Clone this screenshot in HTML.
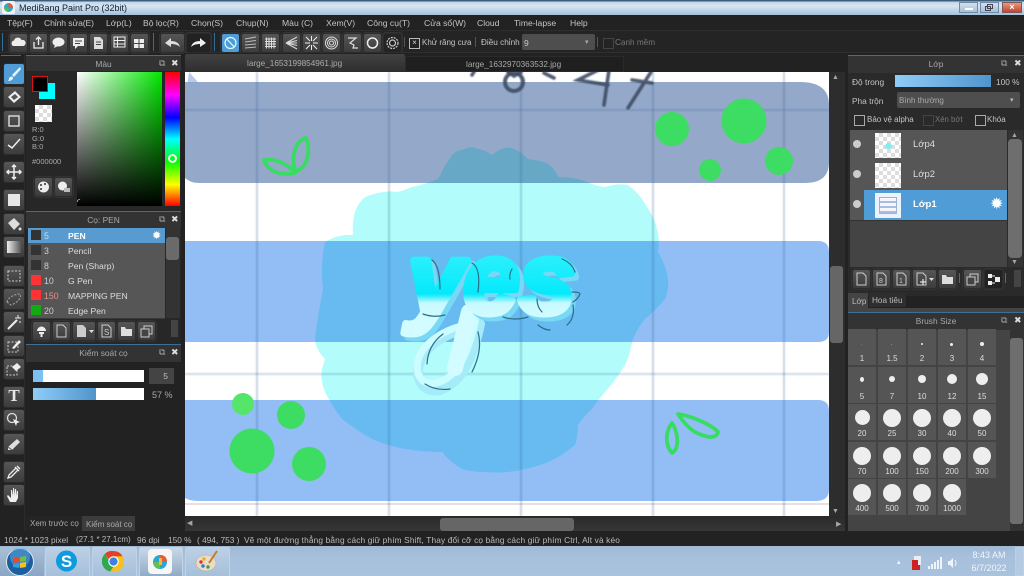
<!DOCTYPE html>
<html><head><meta charset="utf-8"><style>
html,body{margin:0;padding:0;width:1024px;height:576px;overflow:hidden;background:#222}
body{font-family:"Liberation Sans","DejaVu Sans",sans-serif;font-size:8.6px;color:#c4c4c4;position:relative}
.a,.a *{box-sizing:border-box}
.a{position:absolute}
.t{position:absolute;white-space:nowrap;line-height:12px}
.b{position:absolute;width:17px;height:18px;background:linear-gradient(#565656,#3c3c3c);border:1px solid #2c2c2c;border-radius:3px;box-shadow:0 0 0 1px #333}
.b svg,.v svg{position:absolute;left:0;top:0;width:100%;height:100%}
.v{position:absolute;left:3px;width:20px;height:20px;background:linear-gradient(#565656,#3c3c3c);border-radius:3px;border:1px solid #2c2c2c}
.h{position:absolute;height:17px;background:#333;border-top:1px solid #3f6f90;text-align:center;line-height:16px;color:#a8a8a8;font-size:8.400px}
.r{position:absolute;left:28px;width:137px;height:15px;background:#565656;border-bottom:1px solid #3a3a3a}
.r i{position:absolute;left:3px;top:2px;width:10px;height:10px;background:#333}
.r span{position:absolute;left:16px;top:2px;line-height:12px;font-size:8.800px;color:#ccc}
.r b{position:absolute;left:40px;top:2px;line-height:12px;font-weight:normal;font-size:8.600px;color:#ddd}
.c{position:absolute;width:28px;height:36px;background:#555}
.c i{position:absolute;border-radius:50%;background:#eee}
.c span{position:absolute;left:0;right:0;bottom:2px;text-align:center;font-size:8px;line-height:9px;color:#ddd}
.ck{position:absolute;width:10px;height:10px;border:1px solid #aaa}
.ico{position:absolute;color:#a5a5a5;font-size:9px;line-height:10px}
.ly{position:absolute;left:850px;width:157px;height:30px;background:#565656;border-bottom:1px solid #333}
.th{position:absolute;left:25px;top:3px;width:26px;height:25px;background-color:#fff;background-image:conic-gradient(#ddd 25%,#fff 0 50%,#ddd 0 75%,#fff 0);background-size:8px 8px}
.eye{position:absolute;left:3px;top:10px;width:8px;height:8px;border-radius:50%;background:#ccc}
.tb{position:absolute;top:547px;height:29px;border:1px solid #c0d3e6;border-radius:2px;background:linear-gradient(#bdd0e4,#a5bfda)}
</style></head><body>
<div class="a" style="left:0;top:0;width:1024px;height:15px;background:linear-gradient(#3d5d7c 0,#3d5d7c 1px,#c4d7e8 2px,#d8e6f2 6px,#a5c0da 15px)"></div>
<svg class="a" style="left:2px;top:1px" width="13" height="13" viewBox="0 0 13 13"><rect width="13" height="13" rx="2" fill="#f2f2f2"/><circle cx="6.500" cy="6.500" r="4.500" fill="#2aa7cf"/><path d="M6.500 2A4.500 4.500 0 0 1 11 6.500H6.500z" fill="#e8563a"/><path d="M2 6.500a4.500 4.500 0 0 0 4.500 4.500V6.500z" fill="#59b85a"/></svg>
<div class="t" style="left:19px;top:2px;color:#10202e;font-size:9px">MediBang Paint Pro (32bit)</div>
<div class="a" style="left:959px;top:2px;width:19px;height:11px;background:linear-gradient(#d3e0ec,#a8bfd6);border:1px solid #6f8aa5"><div class="a" style="left:5px;top:5px;width:8px;height:2px;background:#fff;border:0"></div></div>
<div class="a" style="left:980px;top:2px;width:19px;height:11px;background:linear-gradient(#d3e0ec,#a8bfd6);border:1px solid #6f8aa5"><div class="a" style="left:6px;top:1px;width:6px;height:5px;border:1px solid #445"></div><div class="a" style="left:4px;top:3px;width:6px;height:5px;border:1px solid #445"></div></div>
<div class="a" style="left:1002px;top:2px;width:20px;height:11px;background:linear-gradient(#e49a85,#c8402c);border:1px solid #7c5a55;color:#fff;text-align:center;line-height:9px;font-size:9px;font-weight:bold">×</div>

<div class="a" style="left:0;top:15px;width:1024px;height:16px;background:#222;border-bottom:1px solid #2e2e2e"></div>
<div class="t" style="left:7px;top:17px">Tệp(F)</div><div class="t" style="left:44px;top:17px;letter-spacing:-.1px">Chỉnh sửa(E)</div><div class="t" style="left:106px;top:17px">Lớp(L)</div><div class="t" style="left:143px;top:17px">Bộ lọc(R)</div><div class="t" style="left:191px;top:17px">Chọn(S)</div><div class="t" style="left:236px;top:17px">Chụp(N)</div><div class="t" style="left:282px;top:17px">Màu (C)</div><div class="t" style="left:326px;top:17px">Xem(V)</div><div class="t" style="left:367px;top:17px">Công cụ(T)</div><div class="t" style="left:424px;top:17px">Cửa sổ(W)</div><div class="t" style="left:477px;top:17px">Cloud</div><div class="t" style="left:514px;top:17px">Time-lapse</div><div class="t" style="left:570px;top:17px">Help</div>

<div class="a" style="left:0;top:31px;width:1024px;height:22px;background:#242424;border-bottom:1px solid #2f2f2f"></div>
<div class="a" style="left:2px;top:33px;width:1px;height:18px;background:#2f6f9a"></div>
<div class="a" style="left:153px;top:33px;width:1px;height:18px;background:#2f6f9a"></div>
<div class="a" style="left:214px;top:33px;width:1px;height:18px;background:#2f6f9a"></div>
<div class="b" style="left:9px;top:33px"><svg viewBox="0 0 17 18"><path d="M3 12a3 3 0 0 1 1-5.500A4 4 0 0 1 11.500 6a3 3 0 0 1 2 6z" fill="#eee"/></svg></div>
<div class="b" style="left:29px;top:33px"><svg viewBox="0 0 17 18" fill="none" stroke="#eee" stroke-width="1.300"><path d="M4 8v6h9V8M8.500 11V3M6 5.500l2.500-2.500 2.500 2.500"/></svg></div>
<div class="b" style="left:49px;top:33px"><svg viewBox="0 0 17 18"><ellipse cx="8.500" cy="8" rx="6" ry="4.500" fill="#eee"/><path d="M5 11l-1 3 4-2z" fill="#eee"/></svg></div>
<div class="b" style="left:69px;top:33px"><svg viewBox="0 0 17 18"><path d="M3 4h11v8H8l-3 3v-3H3z" fill="#eee"/><path d="M5 7h7M5 9.500h5" stroke="#444"/></svg></div>
<div class="b" style="left:89px;top:33px"><svg viewBox="0 0 17 18"><path d="M4 3h6l3 3v9H4z" fill="#ddd"/><path d="M6 8h5M6 10.500h5" stroke="#444"/></svg></div>
<div class="b" style="left:110px;top:33px"><svg viewBox="0 0 17 18" fill="none" stroke="#eee"><rect x="3" y="3" width="11" height="10"/><path d="M3 6.500h11M3 10h11M6.500 3v10"/></svg></div>
<div class="b" style="left:130px;top:33px"><svg viewBox="0 0 17 18" fill="#eee"><rect x="3" y="5" width="4.500" height="4"/><rect x="8.500" y="5" width="4.500" height="4"/><rect x="3" y="10" width="4.500" height="4"/><rect x="8.500" y="10" width="4.500" height="4"/></svg></div>
<div class="b" style="left:160px;top:33px;width:23px"><svg viewBox="0 0 23 18"><path d="M4 9l6-5v3c5 0 8 2 9 6-2-2-5-3-9-3v3z" fill="#ddd"/></svg></div>
<div class="b" style="left:186px;top:33px;width:23px;background:#222"><svg viewBox="0 0 23 18"><path d="M19 9l-6-5v3C8 7 5 9 4 13c2-2 5-3 9-3v3z" fill="#eee"/></svg></div>
<div class="b" style="left:221px;top:33px;background:#4f9cd6"><svg viewBox="0 0 17 18" fill="none" stroke="#dff" stroke-width="1.200"><circle cx="8.500" cy="9" r="5.500"/><path d="M4.700 5l7.600 8"/></svg></div>
<div class="b" style="left:241px;top:33px"><svg viewBox="0 0 17 18" stroke="#bbb" fill="none"><path d="M3 5l11-2M3 8l11-1.500M3 11l11-1M3 14l11-1"/></svg></div>
<div class="b" style="left:261px;top:33px"><svg viewBox="0 0 17 18" stroke="#ddd" fill="none"><path d="M3 5h11M3 7.500h11M3 10h11M3 12.500h11M4.500 3.500v11M7 3.500v11M9.500 3.500v11M12 3.500v11"/></svg></div>
<div class="b" style="left:282px;top:33px"><svg viewBox="0 0 17 18" stroke="#ddd" fill="none"><path d="M3 9l11-6M3 9l11-2.500M3 9h11M3 9l11 2.500M3 9l11 6"/></svg></div>
<div class="b" style="left:302px;top:33px"><svg viewBox="0 0 17 18" stroke="#eee" fill="none"><path d="M3 3l4 4M14 3l-4 4M3 15l4-4M14 15l-4-4M8.500 2v5M8.500 11v5M2 9h5M10 9h5"/></svg></div>
<div class="b" style="left:322px;top:33px"><svg viewBox="0 0 17 18" stroke="#ddd" fill="none"><circle cx="8.500" cy="9" r="6"/><circle cx="8.500" cy="9" r="4"/><circle cx="8.500" cy="9" r="2"/></svg></div>
<div class="b" style="left:343px;top:33px"><svg viewBox="0 0 17 18" stroke="#ddd" fill="none" stroke-width="1.200"><path d="M4 4h8l-6 5 4 2-1 3h5"/></svg></div>
<div class="b" style="left:363px;top:33px"><svg viewBox="0 0 17 18" stroke="#eee" fill="none" stroke-width="1.500"><circle cx="8.500" cy="9" r="5"/></svg></div>
<div class="b" style="left:383px;top:33px;background:#242424"><svg viewBox="0 0 17 18" stroke="#ccc" fill="none" stroke-width="1.200"><circle cx="8.500" cy="9" r="5.500" stroke-dasharray="2 1"/><circle cx="8.500" cy="9" r="3"/></svg></div>
<div class="a" style="left:404px;top:37px;width:1px;height:10px;background:#555"></div>
<div class="ck" style="left:409px;top:38px;width:9px;height:9px;border-color:#bbb;color:#ddd;font-size:8px;line-height:7px;text-align:center">×</div>
<div class="t" style="left:422px;top:37px;font-size:8px">Khử răng cưa</div>
<div class="a" style="left:475px;top:37px;width:1px;height:10px;background:#555"></div>
<div class="t" style="left:481px;top:37px;font-size:8.200px">Điều chỉnh</div>
<div class="a" style="left:522px;top:34px;width:73px;height:16px;background:#4e4e4e;border-radius:2px"></div>
<div class="t" style="left:524px;top:37px;font-size:8.500px">9</div>
<div class="t" style="left:585px;top:37px;font-size:7px;color:#aaa">▾</div>
<div class="a" style="left:597px;top:37px;width:1px;height:10px;background:#555"></div>
<div class="ck" style="left:603px;top:38px;width:9px;height:9px;border-color:#444"></div>
<div class="t" style="left:615px;top:37px;font-size:8.200px;color:#777">Cạnh mềm</div>

<div class="a" style="left:185px;top:53px;width:660px;height:19px;background:#222"></div>
<div class="a" style="left:185px;top:54px;width:220px;height:18px;background:linear-gradient(#424242,#2e2e2e);border-radius:2px 2px 0 0"></div>
<div class="t" style="left:247px;top:58px;font-size:8.200px;color:#aaa">large_1653199854961.jpg</div>
<div class="a" style="left:405px;top:56px;width:219px;height:16px;background:#1f1f1f;border:1px solid #2b2b2b"></div>
<div class="t" style="left:466px;top:59px;font-size:8.200px;color:#aaa">large_1632970363532.jpg</div>

<svg class="a" style="left:185px;top:72px" width="644" height="444" viewBox="185 72 644 444">
<defs>
<linearGradient id="g" gradientUnits="userSpaceOnUse" x1="0" y1="255" x2="0" y2="320"><stop offset="0" stop-color="#2bf0fc"/><stop offset=".6" stop-color="#05e9fb"/><stop offset=".74" stop-color="#c8f9ff"/><stop offset="1" stop-color="#d2fcff"/></linearGradient>
<filter id="bl" x="-5%" y="-5%" width="110%" height="110%"><feGaussianBlur stdDeviation=".7"/></filter>
</defs>
<rect x="185" y="72" width="644" height="444" fill="#fff"/>
<path d="M185 82H800Q829 82 829 105V162Q829 183 805 183H200Q190 183 185 178Z" fill="#94a9c9"/>
<path d="M185 241H818Q829 241 829 252V332Q829 342 818 342H185Z" fill="#93bdf5"/>
<path d="M185 400H818Q829 400 829 411V490Q829 501 815 501H200Q190 501 185 498Z" fill="#93bdf5"/>
<rect x="185" y="503" width="644" height="2" fill="#e8dfe2"/>
<path d="M189 72L205 90L192 84L187 86Z" fill="#8fa6d8" opacity=".6"/>
<g style="mix-blend-mode:multiply">
<path fill="#b2fdfb" d="M452 155Q457 150 462 150Q470 146 475 148Q485 150 492 155Q503 146 512 148Q522 152 528 159Q540 160 548 164Q556 170 558 177Q572 177 582 180Q595 186 605 187Q618 183 628 185Q640 194 645 204Q654 216 657 229Q660 240 658 252Q666 265 668 279Q669 290 665 299Q656 310 645 319Q636 330 632 342Q630 355 625 365Q616 380 605 392Q598 400 592 409Q584 416 578 425Q578 436 575 445Q562 456 548 462Q536 467 525 469Q505 474 485 472Q472 472 462 469Q450 462 442 452Q424 452 405 449Q388 446 372 439Q356 430 342 419Q332 406 325 392Q320 380 322 369L325 359Q316 350 315 339Q318 314 323 289Q320 265 325 242Q338 234 353 235Q352 222 355 212Q358 203 365 197Q382 190 398 192Q405 190 412 187Q426 184 438 179Q445 165 452 155Z"/>
</g>
<g stroke="#3d5f95" stroke-width="2" fill="none" filter="url(#bl)">
<path d="M257 72V516M389 72V516M521 72V516M653 72V516M784 72V516" stroke-opacity=".28"/>
<path d="M185 110H829M185 374H829" stroke-opacity=".24"/>
</g>
<g fill="#3ddc62">
<circle cx="672" cy="129" r="17"/><circle cx="744" cy="121" r="22.500"/><circle cx="710" cy="170" r="11"/><circle cx="779" cy="161" r="14"/>
<circle cx="243" cy="404" r="11" fill="#55e56a"/><circle cx="291" cy="415" r="14"/><circle cx="252" cy="451" r="22.500"/><circle cx="309" cy="464" r="17"/>
</g>
<g fill="none" stroke="#39dc62" stroke-width="3.800" stroke-linejoin="round">
<path d="M264 160C272 158 288 163 295 173C282 176 268 172 264 160Z"/>
<path d="M296 171C290 160 295 140 306 138C311 150 308 168 296 171Z"/>
<path d="M678 414C692 416 712 425 718 432C716 440 705 437 695 432C688 428 682 420 678 414Z"/>
<path d="M672 423C665 432 665 445 672 453C680 448 678 432 672 423Z"/>
</g>
<g fill="none" stroke="#3d4a64" stroke-opacity=".9" stroke-width="3.600" stroke-linecap="round" filter="url(#bl)">
<circle cx="514" cy="82" r="9" stroke-width="4"/><path d="M508 72L514 76L521 72"/>
<path d="M544 73L554 78M475 70L472 75"/>
<path d="M598 70L578 80L608 85M609 70L604 105"/>
<path d="M651 72L628 108M632 80L652 83"/>
</g>
<g fill="none" stroke-linecap="round">
<path d="M478 322C472 350 462 380 438 388C420 392 411 374 419 357C427 341 445 331 464 327" stroke="#a5ecf8" stroke-width="10" transform="translate(2 2)"/>
<path d="M476 318C470 346 460 378 436 383C420 387 413 371 420 355C427 341 443 331 461 326" stroke="#cbfcff" stroke-width="7"/>
<path d="M469 312L455 368" stroke="#d2fcff" stroke-width="16"/>
</g>
<text x="408" y="313" font-family="Liberation Sans,sans-serif" font-style="italic" font-weight="bold" font-size="100" textLength="167" lengthAdjust="spacingAndGlyphs" fill="#78d8f6" stroke="#78d8f6" stroke-width="7" stroke-linejoin="round" transform="translate(4 4)">yes</text>
<text x="408" y="313" font-family="Liberation Sans,sans-serif" font-style="italic" font-weight="bold" font-size="100" textLength="167" lengthAdjust="spacingAndGlyphs" fill="url(#g)" stroke="url(#g)" stroke-width="7" stroke-linejoin="round">yes</text>
<g fill="none" stroke="#2b6f86" stroke-width="1.200" stroke-linecap="round">
<path d="M432 260Q440 266 440 289M472 263Q481 268 478 292M423 314Q434 318 445 315M503 317Q515 321 528 317M562 259Q572 263 575 272M572 292Q580 292 580 294Q578 299 573 302M573 305Q575 318 567 325M538 325Q544 330 550 330M512 269Q509 274 510 279M537 299Q537 307 542 312M443 334Q428 345 427 364M478 332Q483 350 472 372M425 384Q436 391 450 389"/>
</g>
</svg>
<div class="a" style="left:829px;top:72px;width:16px;height:444px;background:#2d2d2d"></div>
<div class="a" style="left:830px;top:266px;width:13px;height:77px;background:#666;border-radius:3px"></div>
<div class="ico" style="left:832px;top:73px;font-size:7px">▲</div>
<div class="ico" style="left:832px;top:507px;font-size:7px">▼</div>
<div class="a" style="left:185px;top:516px;width:660px;height:15px;background:linear-gradient(#2a2a2a,#363636)"></div>
<div class="a" style="left:440px;top:518px;width:134px;height:13px;background:#666;border-radius:3px"></div>
<div class="ico" style="left:187px;top:519px;font-size:7px">◀</div>
<div class="ico" style="left:836px;top:520px;font-size:7px">▶</div>

<!-- tool column -->
<div class="a" style="left:0;top:55px;width:25px;height:476px;background:#222;border-right:1px solid #2c2c2c"></div>
<div class="a" style="left:1px;top:55px;width:20px;height:1px;background:#3f6f90"></div>
<div class="v" style="top:63px;background:#4f9cd6"><svg viewBox="0 0 20 20"><path d="M16 3L8 11l2 2 7-8zM5 14c2-2 4-2 4 0s-3 3-5 3c1-1 1-2 1-3z" fill="#e8f4ff"/></svg></div>
<div class="v" style="top:86px"><svg viewBox="0 0 20 20"><path d="M4 10l7-6 6 6-7 6z" fill="#eee"/><path d="M7 10l4-3 3 3-4 3z" fill="#555"/></svg></div>
<div class="v" style="top:110px"><svg viewBox="0 0 20 20"><rect x="5" y="5" width="10" height="10" fill="none" stroke="#ddd" stroke-width="1.400"/></svg></div>
<div class="v" style="top:133px"><svg viewBox="0 0 20 20" stroke="#eee" stroke-width="1.500" fill="none"><path d="M4 11l4 3 8-9"/></svg></div>
<div class="v" style="top:161px"><svg viewBox="0 0 20 20" stroke="#eee" stroke-width="1.500" fill="none"><path d="M10 3v14M3 10h14M8 5l2-2 2 2M8 15l2 2 2-2M5 8l-2 2 2 2M15 8l2 2-2 2"/></svg></div>
<div class="v" style="top:189px"><svg viewBox="0 0 20 20"><rect x="4" y="4" width="12" height="12" fill="#e6e6e6"/></svg></div>
<div class="v" style="top:213px"><svg viewBox="0 0 20 20"><path d="M4 9l6-5 6 6-6 6z" fill="#ddd"/><circle cx="16" cy="15" r="1.500" fill="#ddd"/></svg></div>
<div class="v" style="top:236px"><svg viewBox="0 0 20 20"><defs><linearGradient id="gr"><stop offset="0" stop-color="#eee"/><stop offset="1" stop-color="#555"/></linearGradient></defs><rect x="3" y="4" width="14" height="12" fill="url(#gr)"/></svg></div>
<div class="v" style="top:265px"><svg viewBox="0 0 20 20"><rect x="4" y="5" width="12" height="10" fill="none" stroke="#ccc" stroke-dasharray="2 1.500"/></svg></div>
<div class="v" style="top:288px"><svg viewBox="0 0 20 20"><path d="M3 13c1-5 8-8 13-8 2 4-3 9-9 11z" fill="none" stroke="#aaa" stroke-dasharray="2 1.500"/></svg></div>
<div class="v" style="top:311px"><svg viewBox="0 0 20 20"><path d="M4 17L13 8" stroke="#eee" stroke-width="2"/><path d="M14 3v3M11 6h6M16 9v2" stroke="#eee"/></svg></div>
<div class="v" style="top:335px"><svg viewBox="0 0 20 20"><rect x="4" y="6" width="10" height="10" fill="none" stroke="#ccc" stroke-dasharray="2 1.500"/><path d="M8 12l7-8 2 2-7 7z" fill="#eee"/></svg></div>
<div class="v" style="top:358px"><svg viewBox="0 0 20 20"><rect x="3" y="7" width="10" height="9" fill="none" stroke="#ccc" stroke-dasharray="2 1.500"/><path d="M8 8l5-4 4 4-5 4z" fill="#eee"/></svg></div>
<div class="v" style="top:386px;text-align:center;font:bold 17px/18px 'Liberation Serif',serif;color:#e6e6e6">T</div>
<div class="v" style="top:409px"><svg viewBox="0 0 20 20"><circle cx="8" cy="8" r="4.500" fill="none" stroke="#ddd" stroke-width="1.300"/><path d="M9 9l7 3-3 1-1 3z" fill="#eee"/></svg></div>
<div class="v" style="top:433px"><svg viewBox="0 0 20 20"><path d="M4 13L13 5l3 3-8 8H4z" fill="#ddd"/><path d="M4 13l4 3" stroke="#555"/></svg></div>
<div class="v" style="top:461px"><svg viewBox="0 0 20 20" fill="none" stroke="#eee" stroke-width="1.300"><path d="M4 16l1-3 7-7 2 2-7 7zM11 5l4 4M13 4l3 3"/></svg></div>
<div class="v" style="top:484px"><svg viewBox="0 0 20 20"><path d="M6 17l-3-6 1-1 3 3V5h1l1 6V3h1l1 8V4h1l1 7V6h1v7l-2 4z" fill="#eee"/></svg></div>

<!-- Color panel -->
<div class="h" style="left:26px;top:55px;width:155px">Màu</div>
<div class="a" style="left:26px;top:71px;width:155px;height:139px;background:#272727"></div>
<div class="ico" style="left:159px;top:58px">⧉</div><div class="ico" style="left:171px;top:58px;font-weight:bold;color:#ddd">✖</div>
<div class="a" style="left:39px;top:83px;width:16px;height:16px;background:#0ff"></div>
<div class="a" style="left:32px;top:76px;width:16px;height:16px;background:#000;border:1px solid #d11"></div>
<div class="a" style="left:35px;top:105px;width:17px;height:17px;background-color:#fff;background-image:conic-gradient(#ddd 25%,#fff 0 50%,#ddd 0 75%,#fff 0);background-size:8px 8px"></div>
<div class="t" style="left:32px;top:126px;font-size:7.500px;line-height:8.500px;color:#aaa">R:0<br>G:0<br>B:0</div>
<div class="t" style="left:32px;top:156px;font-size:7.500px;color:#aaa">#000000</div>
<div class="b" style="left:34px;top:177px"><svg viewBox="0 0 17 18"><circle cx="8.500" cy="9" r="5.500" fill="#eee"/><circle cx="6" cy="7" r="1" fill="#333"/><circle cx="10" cy="6" r="1" fill="#333"/><circle cx="6" cy="11" r="1" fill="#333"/></svg></div>
<div class="b" style="left:54px;top:177px"><svg viewBox="0 0 17 18"><circle cx="7.500" cy="8" r="4.500" fill="#eee"/><rect x="9" y="10" width="6" height="4" fill="#bbb"/></svg></div>
<div class="a" style="left:77px;top:72px;width:85px;height:134px;background:linear-gradient(to bottom,rgba(0,0,0,0),#000),linear-gradient(to right,#fff,#00e800)"></div>
<div class="a" style="left:77px;top:198px;width:8px;height:8px;border:0;color:#fff;font-size:8px;line-height:8px">◜</div>
<div class="a" style="left:165px;top:72px;width:15px;height:134px;background:linear-gradient(#f00,#f0f 17%,#00f 34%,#0ff 50%,#0f0 67%,#ff0 84%,#f00)"></div>
<div class="a" style="left:168px;top:154px;width:9px;height:9px;border-radius:50%;border:2px solid #fff"></div>

<!-- Brush panel -->
<div class="a" style="left:26px;top:210px;width:155px;height:134px;background:#272727"></div>
<div class="h" style="left:26px;top:211px;width:155px">Cọ: PEN</div>
<div class="ico" style="left:159px;top:214px">⧉</div><div class="ico" style="left:171px;top:214px;font-weight:bold;color:#ddd">✖</div>
<div class="r" style="top:228px;background:#579bd0"><i></i><span style="color:#cdd">5</span><b style="color:#fff;font-weight:bold">PEN</b></div>
<div class="t" style="left:152px;top:230px;color:#fff;font-size:11px">✹</div>
<div class="r" style="top:243px"><i></i><span>3</span><b>Pencil</b></div>
<div class="r" style="top:258px"><i></i><span>8</span><b>Pen (Sharp)</b></div>
<div class="r" style="top:273px"><i style="background:#f33"></i><span>10</span><b>G Pen</b></div>
<div class="r" style="top:288px"><i style="background:#f33"></i><span style="color:#e09090">150</span><b>MAPPING PEN</b></div>
<div class="r" style="top:303px"><i style="background:#1a1"></i><span>20</span><b>Edge Pen</b></div>
<div class="a" style="left:166px;top:228px;width:14px;height:90px;background:#333"></div>
<div class="a" style="left:166px;top:237px;width:13px;height:23px;background:#6a6a6a;border-radius:3px"></div>
<div class="b" style="left:32px;top:321px"><svg viewBox="0 0 17 18"><path d="M4 9a4.500 4.500 0 0 1 9 0zM6 10h5v2H9.500v3h-2v-3H6z" fill="#eee"/></svg></div>
<div class="b" style="left:52px;top:321px"><svg viewBox="0 0 17 18"><path d="M4 3h6l3 3v9H4z" fill="none" stroke="#ccc"/></svg></div>
<div class="b" style="left:72px;top:321px;width:22px"><svg viewBox="0 0 22 18"><path d="M4 3h6l3 3v9H4z" fill="#ccc"/><path d="M16 8h5l-2.500 3z" fill="#ddd"/></svg></div>
<div class="b" style="left:97px;top:321px"><svg viewBox="0 0 17 18"><path d="M4 3h6l3 3v9H4z" fill="none" stroke="#ccc"/><text x="6" y="13" font-size="8" fill="#ccc">S</text></svg></div>
<div class="b" style="left:117px;top:321px"><svg viewBox="0 0 17 18"><path d="M3 5h4l1 2h6v7H3z" fill="#ddd"/></svg></div>
<div class="b" style="left:137px;top:321px"><svg viewBox="0 0 17 18" fill="none" stroke="#ccc"><rect x="6" y="4" width="8" height="8"/><rect x="3" y="7" width="8" height="8" fill="#444"/></svg></div>
<div class="a" style="left:171px;top:320px;width:7px;height:17px;background:#444"></div>

<div class="h" style="left:26px;top:344px;width:155px;border-top-color:#3f6f90">Kiểm soát cọ</div>
<div class="ico" style="left:159px;top:347px">⧉</div><div class="ico" style="left:171px;top:347px;font-weight:bold;color:#ddd">✖</div>
<div class="a" style="left:33px;top:370px;width:111px;height:12px;background:#fff"><div class="a" style="left:0;top:0;width:10px;height:12px;background:#7cc0f0"></div></div>
<div class="a" style="left:149px;top:368px;width:25px;height:16px;background:#444;text-align:right;padding-right:6px;line-height:16px;color:#bbb">5</div>
<div class="a" style="left:33px;top:388px;width:111px;height:12px;background:#fff"><div class="a" style="left:0;top:0;width:63px;height:12px;background:linear-gradient(to right,#8fcdf8,#4f95cc)"></div></div>
<div class="t" style="left:152px;top:389px;color:#aaa;font-size:9px">57 %</div>
<div class="a" style="left:26px;top:516px;width:56px;height:15px;background:#252525"></div>
<div class="t" style="left:30px;top:518px;font-size:8px;color:#aaa">Xem trước cọ</div>
<div class="a" style="left:82px;top:516px;width:53px;height:16px;background:#3c3c3c"></div>
<div class="t" style="left:86px;top:519px;font-size:8px;color:#aaa">Kiểm soát cọ</div>

<!-- Right panel -->
<div class="a" style="left:848px;top:71px;width:176px;height:225px;background:#2a2a2a"></div>
<div class="h" style="left:848px;top:55px;width:176px">Lớp</div>
<div class="ico" style="left:1001px;top:58px">⧉</div><div class="ico" style="left:1014px;top:58px;font-weight:bold;color:#ddd">✖</div>
<div class="t" style="left:852px;top:76px;font-size:8.400px">Độ trong</div>
<div class="a" style="left:895px;top:75px;width:96px;height:12px;background:linear-gradient(to right,#8fcdf8,#4f95cc)"></div>
<div class="t" style="left:996px;top:76px;font-size:8.300px">100 %</div>
<div class="t" style="left:852px;top:95px;font-size:8.300px">Pha trộn</div>
<div class="a" style="left:897px;top:92px;width:123px;height:16px;background:#4e4e4e;border-radius:2px"></div>
<div class="t" style="left:899px;top:95px;font-size:8px;color:#aaa">Bình thường</div>
<div class="t" style="left:1010px;top:95px;font-size:7px;color:#bbb">▾</div>
<div class="ck" style="left:854px;top:115px;width:9px;height:9px"></div><div class="t" style="left:867px;top:114px;font-size:8px">Bảo vệ alpha</div>
<div class="ck" style="left:923px;top:115px;width:9px;height:9px;border-color:#444"></div><div class="t" style="left:935px;top:114px;font-size:7.800px;color:#777">Xén bớt</div>
<div class="ck" style="left:975px;top:115px;width:9px;height:9px"></div><div class="t" style="left:987px;top:114px;font-size:8px">Khóa</div>
<div class="a" style="left:850px;top:130px;width:157px;height:137px;background:#444"></div>
<div class="ly" style="top:130px"><i class="eye"></i><div class="th"><div class="a" style="left:10px;top:10px;width:7px;height:6px;background:#7eeef0;border-radius:50%"></div></div><div class="t" style="left:63px;top:9px;color:#ddd;font-size:9.500px">Lớp4</div></div>
<div class="ly" style="top:160px"><i class="eye"></i><div class="th"></div><div class="t" style="left:63px;top:9px;color:#ddd;font-size:9.500px">Lớp2</div></div>
<div class="ly" style="top:190px;background:#565656"><i class="eye"></i><div class="a" style="left:14px;top:0;width:143px;height:30px;background:#4f9cd6"></div><div class="th" style="background:#eef2fb"><div class="a" style="left:4px;top:4px;width:18px;height:17px;border:1px solid #9cb4d8;background:repeating-linear-gradient(#f4f6fc 0 3px,#a6bce0 3px 5px)"></div></div><div class="t" style="left:63px;top:9px;color:#fff;font-size:9.500px;font-weight:bold">Lớp1</div><div class="t" style="left:140px;top:6px;color:#fff;font-size:16px;line-height:18px">✹</div></div>
<div class="a" style="left:1008px;top:130px;width:15px;height:137px;background:#333"></div>
<div class="a" style="left:1008px;top:139px;width:14px;height:119px;background:#6e6e6e;border-radius:4px"></div>
<div class="ico" style="left:1011px;top:131px;font-size:7px">▲</div><div class="ico" style="left:1011px;top:258px;font-size:7px">▼</div>
<div class="b" style="left:852px;top:269px"><svg viewBox="0 0 17 18"><path d="M4 3h6l3 3v9H4z" fill="none" stroke="#ccc"/></svg></div>
<div class="b" style="left:872px;top:269px"><svg viewBox="0 0 17 18"><path d="M4 3h6l3 3v9H4z" fill="none" stroke="#ccc"/><text x="6" y="13" font-size="7" fill="#ccc">8</text></svg></div>
<div class="b" style="left:892px;top:269px"><svg viewBox="0 0 17 18"><path d="M4 3h6l3 3v9H4z" fill="none" stroke="#ccc"/><text x="6" y="13" font-size="7" fill="#ccc">1</text></svg></div>
<div class="b" style="left:912px;top:269px;width:23px"><svg viewBox="0 0 23 18"><path d="M4 3h6l3 3v9H4z" fill="none" stroke="#ccc"/><path d="M7 12h6M10 9v6" stroke="#fff"/><path d="M16 8h5l-2.500 3z" fill="#ddd"/></svg></div>
<div class="b" style="left:938px;top:269px"><svg viewBox="0 0 17 18"><path d="M3 5h4l1 2h6v7H3z" fill="#ddd"/></svg></div>
<div class="a" style="left:959px;top:273px;width:1px;height:10px;background:#666"></div>
<div class="b" style="left:963px;top:269px"><svg viewBox="0 0 17 18" fill="none" stroke="#ccc"><rect x="6" y="4" width="8" height="8"/><rect x="3" y="7" width="8" height="8" fill="#444"/></svg></div>
<div class="b" style="left:984px;top:269px;background:#222"><svg viewBox="0 0 17 18" fill="#eee"><rect x="3" y="4" width="4" height="4"/><rect x="3" y="11" width="4" height="4"/><rect x="10" y="7" width="5" height="5"/><path d="M7 6h3M7 13h3" stroke="#eee"/></svg></div>
<div class="a" style="left:1005px;top:273px;width:1px;height:10px;background:#666"></div>
<div class="a" style="left:1014px;top:270px;width:7px;height:17px;background:#444"></div>
<div class="a" style="left:848px;top:293px;width:20px;height:15px;background:#444"></div>
<div class="t" style="left:852px;top:296px;font-size:8.200px;color:#bbb">Lớp</div>
<div class="a" style="left:869px;top:293px;width:37px;height:14px;background:#2e2e2e"></div>
<div class="t" style="left:872px;top:295px;font-size:8.200px;color:#bbb">Hoa tiêu</div>
<div class="a" style="left:848px;top:308px;width:176px;height:226px;background:#444"></div>
<div class="h" style="left:848px;top:312px;width:176px;background:#333">Brush Size</div>
<div class="ico" style="left:1001px;top:315px">⧉</div><div class="ico" style="left:1014px;top:315px;font-weight:bold;color:#ddd">✖</div>
<div class="a" style="left:1010px;top:329px;width:14px;height:205px;background:#333"></div>
<div class="a" style="left:1010px;top:338px;width:13px;height:186px;background:#6e6e6e;border-radius:3px"></div>

<div class="c" style="left:848px;top:329px"><i style="left:13px;top:15px;width:1px;height:1px;background:#777"></i><span>1</span></div>
<div class="c" style="left:878px;top:329px"><i style="left:13px;top:15px;width:1px;height:1px;background:#999"></i><span>1.5</span></div>
<div class="c" style="left:908px;top:329px"><i style="left:13px;top:14px;width:2px;height:2px"></i><span>2</span></div>
<div class="c" style="left:938px;top:329px"><i style="left:12px;top:14px;width:3px;height:3px"></i><span>3</span></div>
<div class="c" style="left:968px;top:329px"><i style="left:12px;top:13px;width:4px;height:4px"></i><span>4</span></div>
<div class="c" style="left:848px;top:367px"><i style="left:12px;top:10px;width:4px;height:5px"></i><span>5</span></div>
<div class="c" style="left:878px;top:367px"><i style="left:11px;top:9px;width:6px;height:6px"></i><span>7</span></div>
<div class="c" style="left:908px;top:367px"><i style="left:10px;top:8px;width:8px;height:8px"></i><span>10</span></div>
<div class="c" style="left:938px;top:367px"><i style="left:9px;top:7px;width:10px;height:10px"></i><span>12</span></div>
<div class="c" style="left:968px;top:367px"><i style="left:8px;top:6px;width:12px;height:12px"></i><span>15</span></div>
<div class="c" style="left:848px;top:404px"><i style="left:7px;top:6px;width:15px;height:15px"></i><span>20</span></div>
<div class="c" style="left:878px;top:404px"><i style="left:5px;top:5px;width:18px;height:18px"></i><span>25</span></div>
<div class="c" style="left:908px;top:404px"><i style="left:5px;top:5px;width:18px;height:18px"></i><span>30</span></div>
<div class="c" style="left:938px;top:404px"><i style="left:5px;top:5px;width:18px;height:18px"></i><span>40</span></div>
<div class="c" style="left:968px;top:404px"><i style="left:5px;top:5px;width:18px;height:18px"></i><span>50</span></div>
<div class="c" style="left:848px;top:442px"><i style="left:5px;top:5px;width:18px;height:18px"></i><span>70</span></div>
<div class="c" style="left:878px;top:442px"><i style="left:5px;top:5px;width:18px;height:18px"></i><span>100</span></div>
<div class="c" style="left:908px;top:442px"><i style="left:5px;top:5px;width:18px;height:18px"></i><span>150</span></div>
<div class="c" style="left:938px;top:442px"><i style="left:5px;top:5px;width:18px;height:18px"></i><span>200</span></div>
<div class="c" style="left:968px;top:442px"><i style="left:5px;top:5px;width:18px;height:18px"></i><span>300</span></div>
<div class="c" style="left:848px;top:479px"><i style="left:5px;top:5px;width:18px;height:18px"></i><span>400</span></div>
<div class="c" style="left:878px;top:479px"><i style="left:5px;top:5px;width:18px;height:18px"></i><span>500</span></div>
<div class="c" style="left:908px;top:479px"><i style="left:5px;top:5px;width:18px;height:18px"></i><span>700</span></div>
<div class="c" style="left:938px;top:479px"><i style="left:5px;top:5px;width:18px;height:18px"></i><span>1000</span></div>

<!-- status -->
<div class="a" style="left:0;top:531px;width:1024px;height:15px;background:#222"></div>
<div class="t" style="left:4px;top:534px;font-size:8.300px;color:#bbb">1024 * 1023 pixel</div>
<div class="t" style="left:76px;top:534px;font-size:8px;color:#bbb">(27.1 * 27.1cm)</div>
<div class="t" style="left:137px;top:534px;font-size:8.300px;color:#bbb">96 dpi</div>
<div class="t" style="left:168px;top:534px;font-size:8.300px;color:#bbb">150 %</div>
<div class="t" style="left:197px;top:534px;font-size:8.300px;color:#bbb">( 494, 753 )</div>
<div class="t" style="left:244px;top:534px;font-size:8.300px;letter-spacing:.15px;color:#bbb">Vẽ một đường thẳng bằng cách giữ phím Shift, Thay đổi cỡ cọ bằng cách giữ phím Ctrl, Alt và kéo</div>

<!-- taskbar -->
<div class="a" style="left:0;top:546px;width:1024px;height:30px;background:linear-gradient(#9fb9d5,#a7c0dc 40%,#a9c2dd)"></div>
<div class="a" style="left:0;top:547px;width:44px;height:29px;background:linear-gradient(#a9c0d8,#8aa6c4)"></div>
<svg class="a" style="left:6px;top:548px" width="28" height="28" viewBox="0 0 28 28"><circle cx="14" cy="14" r="13.500" fill="#1d5f9e" stroke="#dfe9f3"/><circle cx="14" cy="9" r="10" fill="#5aa4dc" opacity=".6"/><path d="M7 10l6-1v5l-6 1z" fill="#e8492f"/><path d="M14 9l6-1v5l-6 1z" fill="#6fbf3f"/><path d="M7 16l6-1v5l-6-1z" fill="#2f9fe5"/><path d="M14 15l6-1v5l-6 1z" fill="#f6c01e"/></svg>
<div class="tb" style="left:45px;width:43px"></div>
<div class="tb" style="left:92px;width:43px"></div>
<div class="tb" style="left:139px;width:42px;background:linear-gradient(#c9d8e8,#8fa9c4)"></div>
<div class="tb" style="left:185px;width:43px"></div>
<svg class="a" style="left:55px;top:549px" width="23" height="24" viewBox="0 0 23 24"><circle cx="11.500" cy="12" r="10.500" fill="#0d9be0"/><text x="11.500" y="18" text-anchor="middle" font-family="Liberation Sans" font-size="17" font-weight="bold" fill="#fff">S</text></svg>
<svg class="a" style="left:102px;top:550px" width="23" height="23" viewBox="0 0 24 24"><circle cx="12" cy="12" r="11" fill="#f6c01e"/><path d="M12 1a11 11 0 0 1 9.500 5.500H12A5.500 5.500 0 0 0 7 9.500L3 4A11 11 0 0 1 12 1z" fill="#e2402f"/><path d="M3 4l4.800 8 3.700 6-3 4.500A11 11 0 0 1 3 4z" fill="#2fa84f"/><circle cx="12" cy="12" r="5.500" fill="#fff"/><circle cx="12" cy="12" r="4.300" fill="#3f7fe8"/></svg>
<svg class="a" style="left:148px;top:549px" width="24" height="25" viewBox="0 0 24 25"><rect width="24" height="25" rx="4" fill="#f6f6f6"/><circle cx="12" cy="13" r="7" fill="#2aa7cf"/><path d="M12 6c5 0 7 3 7 7h-7z" fill="#ea5a3a"/><path d="M5 13c0 4 3 7 7 7v-7z" fill="#62bd5a"/><path d="M11 9h3v7h-3z" fill="#f4b93a"/></svg>
<svg class="a" style="left:195px;top:549px" width="24" height="24" viewBox="0 0 24 24"><ellipse cx="11" cy="14" rx="10" ry="8" fill="#e8ddc8" stroke="#b9a98a" stroke-width=".5"/><circle cx="6" cy="13" r="1.700" fill="#d33"/><circle cx="9" cy="10" r="1.700" fill="#e8b020"/><circle cx="8" cy="17" r="1.700" fill="#2a7ad0"/><circle cx="13" cy="18" r="1.700" fill="#3aa04a"/><path d="M14 14L22 2" stroke="#c97a2a" stroke-width="2"/></svg>
<div class="t" style="left:897px;top:557px;font-size:7px;color:#f4f8fc">▴</div>
<svg class="a" style="left:910px;top:555px" width="14" height="16" viewBox="0 0 14 16"><rect x="2" y="5" width="8" height="10" fill="#c22"/><path d="M4 1h7v9H8V5H4z" fill="#e8eef4"/></svg>
<svg class="a" style="left:928px;top:557px" width="14" height="12" viewBox="0 0 14 12" fill="#eef4fa"><rect x="0" y="9" width="2" height="3"/><rect x="3" y="7" width="2" height="5"/><rect x="6" y="5" width="2" height="7"/><rect x="9" y="3" width="2" height="9"/><rect x="12" y="0" width="2" height="12"/></svg>
<svg class="a" style="left:947px;top:557px" width="13" height="12" viewBox="0 0 13 12"><path d="M1 4h2l3-3v10L3 8H1z" fill="#eef4fa"/><path d="M8 3q2 3 0 6" stroke="#eef4fa" fill="none"/></svg>
<div class="t" style="left:971px;top:549px;width:36px;text-align:center;color:#f2f6fa;font-size:9px">8:43 AM</div>
<div class="t" style="left:971px;top:562px;width:36px;text-align:center;color:#f2f6fa;font-size:9px">6/7/2022</div>
<div class="a" style="left:1015px;top:547px;width:9px;height:29px;border:1px solid #bdd0e3;background:#b4cae0"></div>
</body></html>
